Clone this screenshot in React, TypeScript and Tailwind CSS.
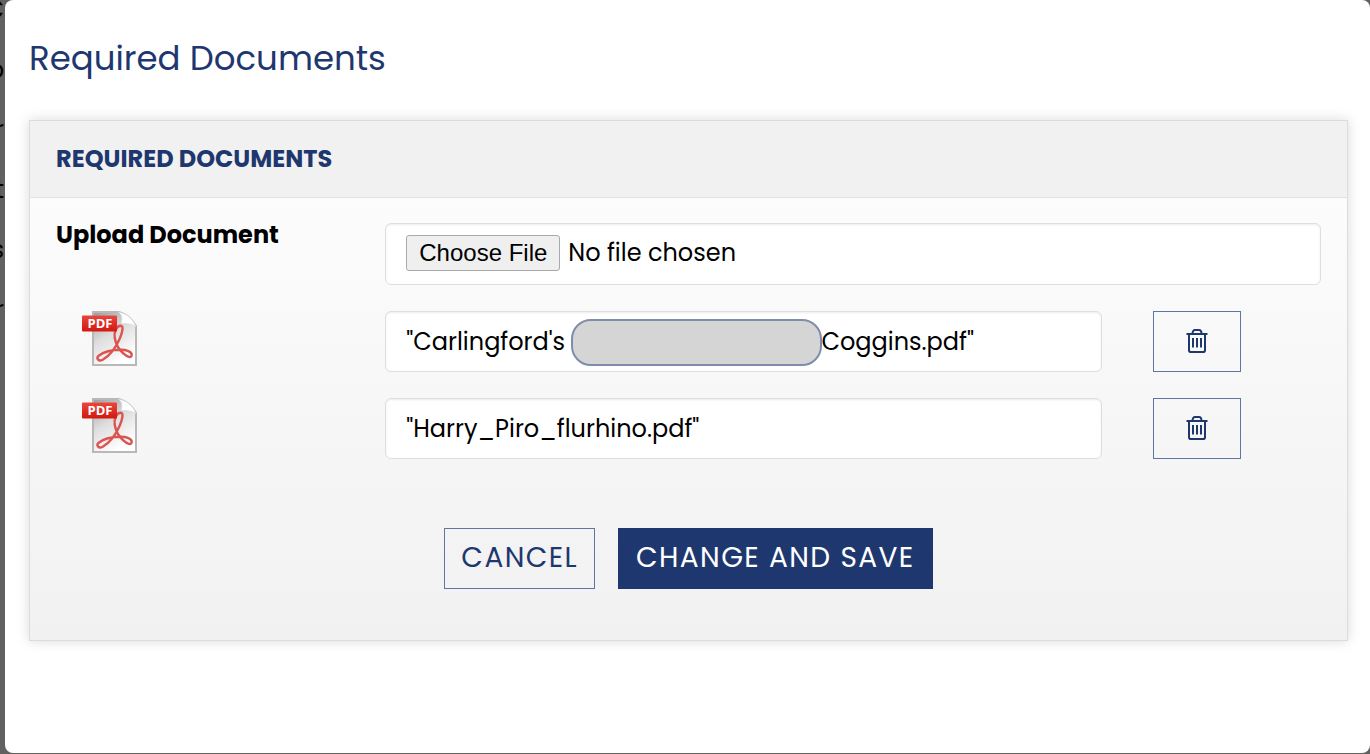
import { useState } from "react";

const DOCUMENTS = [
  // The middle of this name is private, so blanks hold its place under the cover
  { id: 1, name: `"Carlingford's${"\u00a0".repeat(40)}Coggins.pdf"`, redacted: true },
  { id: 2, name: '"Harry_Piro_flurhino.pdf"', redacted: false },
];

const PAGE_LETTERS = ["C", "o", "r", "t", "s", "r"];

function PdfIcon() {
  return (
    <svg viewBox="0 2 57 57" className="h-[57px] w-[57px]" aria-hidden="true">
      <defs>
        <linearGradient id="paper" x1="0" y1="0" x2="0.5" y2="1">
          <stop offset="0" stopColor="#9c9c9c" />
          <stop offset="0.5" stopColor="#dedede" />
          <stop offset="1" stopColor="#ffffff" />
        </linearGradient>
        <linearGradient id="tag" x1="0" y1="0" x2="0" y2="1">
          <stop offset="0" stopColor="#e8473f" />
          <stop offset="1" stopColor="#d3180f" />
        </linearGradient>
      </defs>
      <path d="M12 3H38c7 2 13 7 17 14V56H12z" fill="url(#paper)" stroke="#b8b8b8" strokeWidth="2" />
      <path d="M37 3c5 3 4 8 3 12 5-1 11 0 15 3-2-7-9-14-18-15z" fill="#fff" stroke="#d4d4d4" strokeWidth="0.800" />
      <path
        d="M39.700 16.700c3 0 2 6-1 13-4 9-10 17-17 21-4 2-7-1-4-4 5-4 14-6 22-6 6 0 11 2 11 5 0 4-5 2-8-1-5-4-8-10-9-16-1-6 2-12 6-12z"
        fill="none"
        stroke="#db5450"
        strokeWidth="2.400"
      />
      <rect x="1" y="6.500" width="35" height="16" rx="1" fill="url(#tag)" />
      <text x="19" y="19" textAnchor="middle" fontSize="13" fontWeight="700" fill="#fff" fontFamily="Open Sans, sans-serif">
        PDF
      </text>
    </svg>
  );
}

function TrashIcon() {
  return (
    <svg viewBox="0 0 22 24" className="h-6 w-[22px]" fill="none" stroke="currentColor" strokeWidth="2" aria-hidden="true">
      <path d="M0.500 5h21" />
      <path d="M6.500 5c0-2.800 1-4 2.500-4h4c1.500 0 2.500 1.200 2.500 4" />
      <path d="M3 5v16.200c0 1 .8 1.800 1.800 1.800h12.400c1 0 1.800-.8 1.800-1.800V5" />
      <path d="M7 9v9.500M11 9v9.500M15 9v9.500" />
    </svg>
  );
}

export default function App() {
  const [documents, setDocuments] = useState(DOCUMENTS);

  const removeDocument = (id: number) =>
    setDocuments(documents.filter((doc) => doc.id !== id));

  return (
    <div className="flex min-h-screen bg-[#636160] pb-0.5 font-[Poppins,Inter,sans-serif] text-2xl text-black">
      {/* ---------- Page behind the dialog ---------- */}
      <div className="-mt-5 flex w-1 shrink-0 flex-col items-end overflow-hidden" aria-hidden="true">
        {PAGE_LETTERS.map((letter, i) => (
          <span key={i} className="h-[60px] leading-[60px]">
            {letter}
          </span>
        ))}
      </div>

      {/* ---------- Dialog ---------- */}
      <main className="ml-px flex-1 rounded-lg bg-white pr-[22px] pb-28 pl-6">
        <h1 className="pt-8 pb-9 text-[34px] leading-[52px] text-[#1e386f]">
          Required Documents
        </h1>

        <form
          className="border border-[#dcdcdc] bg-linear-to-b from-[#fefefe] to-[#f1f1f1] shadow-[0_0_12px_rgba(0,0,0,0.15)]"
          onSubmit={(e) => e.preventDefault()}
        >
          <h2 className="border-b border-[#e2e2e2] bg-[#f1f1f1] px-[26px] py-5 text-2xl leading-9 font-bold text-[#1e386f]">
            REQUIRED DOCUMENTS
          </h2>

          <div className="flex flex-col gap-[26px] pt-[25px]">
            <div className="flex">
              <div className="w-1/4 px-[26px]">
                <label htmlFor="upload" className="block leading-6 font-bold">
                  Upload Document
                </label>
              </div>
              <div className="w-3/4 px-[26px]">
                <input
                  id="upload"
                  type="file"
                  className="block h-[62px] w-full rounded-md border border-[#dedede] bg-white px-5 py-[11px] leading-9 shadow-[inset_0_1px_2px_rgba(0,0,0,0.08)] file:mr-2 file:h-9 file:rounded-[3px] file:border file:border-solid file:border-[#a9a9a9] file:bg-[#efefef] file:px-3 file:font-['Liberation_Sans',sans-serif] file:text-2xl file:leading-8"
                />
              </div>
            </div>

            {documents.map((doc) => (
              <div key={doc.id} className="flex">
                <div className="w-1/4 px-[51px]">
                  <PdfIcon />
                </div>
                <div className="relative w-7/12 px-[26px]">
                  <input
                    type="text"
                    readOnly
                    aria-label="Document name"
                    value={doc.name}
                    className="block h-[61px] w-full rounded-md border border-[#dedede] bg-white px-5 shadow-[inset_0_1px_2px_rgba(0,0,0,0.08)]"
                  />
                  {doc.redacted && (
                    <span className="absolute top-2 left-[212px] h-[47px] w-[251px] rounded-[20px] border-2 border-[#7f8dab] bg-[#d5d5d5]" />
                  )}
                </div>
                <div className="px-[25px]">
                  <button
                    type="button"
                    aria-label="Delete document"
                    onClick={() => removeDocument(doc.id)}
                    className="flex h-[61px] w-[88px] items-center justify-center border border-[#5f76a3] pb-0.5 text-[#1e386f]"
                  >
                    <TrashIcon />
                  </button>
                </div>
              </div>
            ))}
          </div>

          <div className="flex justify-center gap-[23px] pt-[69px] pb-[51px] text-[28px] tracking-wider">
            <button type="button" className="h-[61px] border border-[#5f76a3] px-4 pb-0.5 text-[#1e386f]">
              CANCEL
            </button>
            <button type="submit" className="h-[61px] bg-[#1e386f] px-[18px] pb-0.5 text-white">
              CHANGE AND SAVE
            </button>
          </div>
        </form>
      </main>
    </div>
  );
}
